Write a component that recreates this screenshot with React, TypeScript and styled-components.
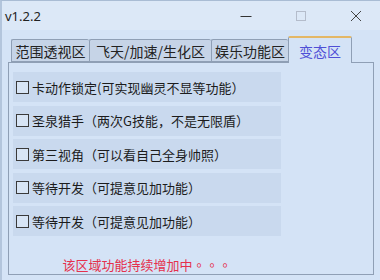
import styled, { createGlobalStyle } from "styled-components";

const Global = createGlobalStyle`
  html, body {
    margin: 0;
    padding: 0;
    background: #d4e3f6;
  }
`;

const FONT = `"Noto Sans CJK SC", "Noto Sans", sans-serif`;

const Window = styled.div`
  width: 380px;
  height: 280px;
  box-sizing: border-box;
  background: #d4e3f6;
  border-top: 1px solid #a9bcd4;
  border-left: 2px solid #b3c5dc;
  display: flex;
  flex-direction: column;
  font-family: ${FONT};
  color: #1c1c1c;
  overflow: hidden;
`;

const TitleBar = styled.div`
  height: 29px;
  display: flex;
  align-items: center;
  background: #dce8f7;
  padding-left: 3px;
`;

const Title = styled.div`
  font-family: "Noto Sans", "Liberation Sans", sans-serif;
  font-size: 13px;
  flex: 1;
  color: #222;
`;

const Controls = styled.div`
  display: flex;
  align-items: center;
  height: 100%;
  margin-right: -3px;
`;

const CtrlButton = styled.div`
  width: 55px;
  height: 100%;
  display: flex;
  align-items: center;
  justify-content: center;
`;

const TabBar = styled.div`
  display: flex;
  align-items: flex-end;
  height: 32px;
  padding-left: 9px;
`;

const Tab = styled.div<{ $active?: boolean; $w: number }>`
  box-sizing: border-box;
  width: ${(p) => p.$w}px;
  height: ${(p) => (p.$active ? 27 : 23)}px;
  margin-bottom: ${(p) => (p.$active ? -1 : 0)}px;
  display: flex;
  align-items: center;
  justify-content: center;
  font-size: 14px;
  background: ${(p) => (p.$active ? "#d4e3f6" : "#c6d4e7")};
  color: ${(p) => (p.$active ? "#4f4fd6" : "#222")};
  border: 1px solid #8f9fb5;
  border-top: ${(p) => (p.$active ? "2px solid #e3b766" : "1px solid #8f9fb5")};
  border-bottom: ${(p) => (p.$active ? "none" : "1px solid #8f9fb5")};
  border-right: ${(p) => (p.$active ? "1px solid #8f9fb5" : "none")};
  border-radius: 2px 2px 0 0;
  position: relative;
  z-index: ${(p) => (p.$active ? 1 : 0)};
`;

const Panel = styled.div`
  margin: 0 6px 0 6px;
  height: 213px;
  box-sizing: border-box;
  border: 1px solid #8f9fb5;
  padding: 9px 0 0 4px;
  display: flex;
  flex-direction: column;
  gap: 3.5px;
`;

const Row = styled.label`
  width: 268px;
  height: 30px;
  flex-shrink: 0;
  background: #c9d9ee;
  display: flex;
  align-items: center;
  gap: 3px;
  padding-left: 3px;
  box-sizing: border-box;
  font-size: 13px;
  white-space: nowrap;
`;

const Box = styled.span`
  width: 13px;
  height: 13px;
  box-sizing: border-box;
  border: 1px solid #3a3a3a;
  background: #d8e5f5;
  flex-shrink: 0;
`;

const Note = styled.div`
  width: 268px;
  margin-top: 15px;
  text-align: center;
  font-size: 13px;
  color: #e5304c;
`;

const Dots = styled.span`
  font-family: "Noto Sans CJK TC", "Noto Sans CJK SC", sans-serif;
`;

const items = [
  "卡动作锁定(可实现幽灵不显等功能）",
  "圣泉猎手（两次G技能，不是无限盾）",
  "第三视角（可以看自己全身帅照）",
  "等待开发（可提意见加功能）",
  "等待开发（可提意见加功能）",
];

const tabs = [
  { label: "范围透视区", w: 78 },
  { label: "飞天/加速/生化区", w: 122 },
  { label: "娱乐功能区", w: 77 },
  { label: "变态区", w: 64, active: true },
];

export default function App() {
  return (
    <>
      <Global />
      <Window>
        <TitleBar>
          <Title>v1.2.2</Title>
          <Controls>
            <CtrlButton>
              <svg width="12" height="12" viewBox="0 0 12 12">
                <path d="M0.5 6.5h11" stroke="#333" strokeWidth="1" />
              </svg>
            </CtrlButton>
            <CtrlButton>
              <svg width="12" height="12" viewBox="0 0 12 12">
                <rect x="1.5" y="1.5" width="9" height="9" fill="none" stroke="#b4bccb" />
              </svg>
            </CtrlButton>
            <CtrlButton>
              <svg width="12" height="12" viewBox="0 0 12 12">
                <path d="M1 1l10 10M11 1L1 11" stroke="#444" strokeWidth="1" />
              </svg>
            </CtrlButton>
          </Controls>
        </TitleBar>
        <TabBar>
          {tabs.map((t) => (
            <Tab key={t.label} $w={t.w} $active={t.active}>
              {t.label}
            </Tab>
          ))}
        </TabBar>
        <Panel>
          {items.map((text, i) => (
            <Row key={i}>
              <Box />
              {text}
            </Row>
          ))}
          <Note>
            该区域功能持续增加中<Dots>。。。</Dots>
          </Note>
        </Panel>
      </Window>
    </>
  );
}
